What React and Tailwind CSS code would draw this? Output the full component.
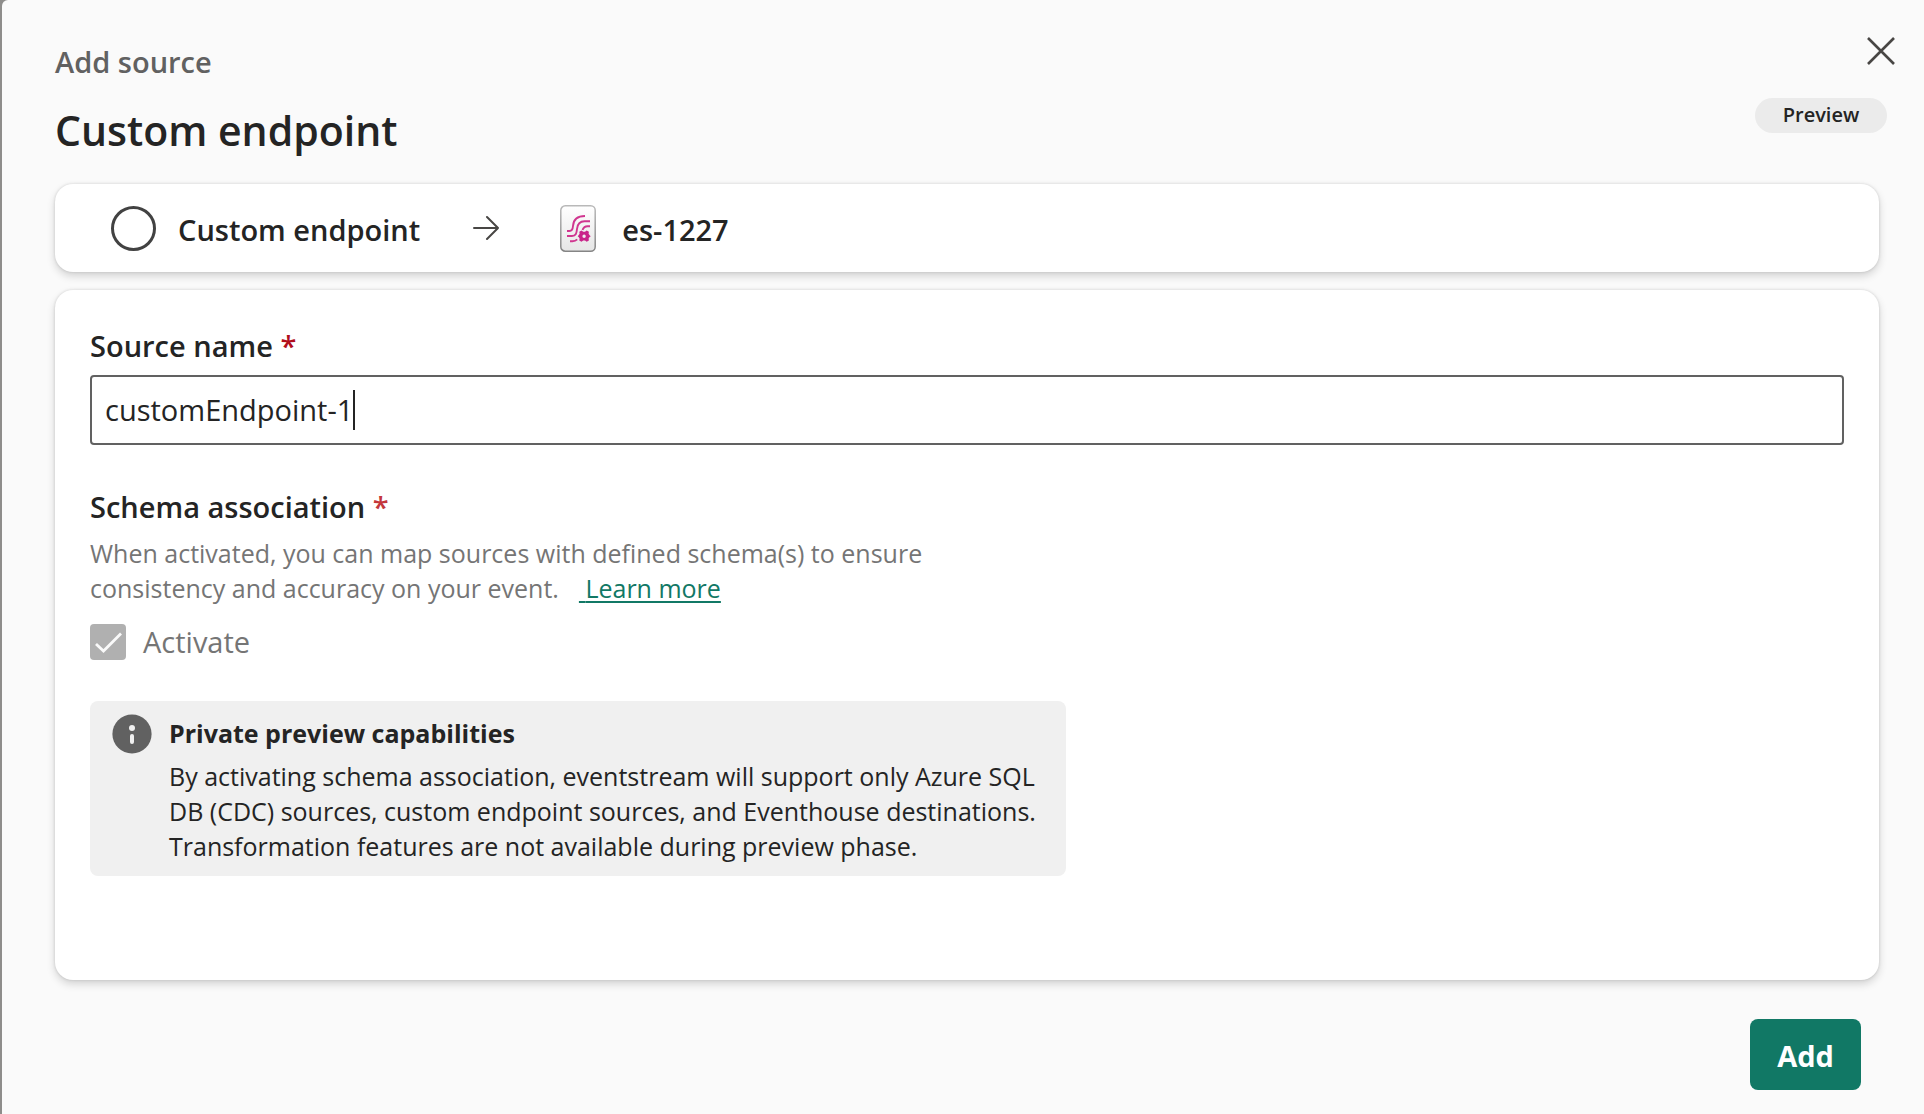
function StreamIcon() {
  return (
    <svg viewBox="0 0 36 47" className="h-[47px] w-9 shrink-0" fill="none" aria-hidden="true">
      <defs>
        <linearGradient id="tile" x1="0" y1="0" x2="0" y2="1">
          <stop offset="0" stopColor="#ffffff" />
          <stop offset="1" stopColor="#e6e6e6" />
        </linearGradient>
        <linearGradient id="rim" x1="0" y1="0" x2="0" y2="1">
          <stop offset="0" stopColor="#b9b9b9" />
          <stop offset="1" stopColor="#858585" />
        </linearGradient>
      </defs>
      <rect x="0.8" y="0.8" width="34.4" height="45.4" rx="4.5" fill="url(#tile)" stroke="url(#rim)" strokeWidth="1.5" />
      <g stroke="#d0368f" strokeWidth="1.9">
        <path d="M7 26h2.5c3 0 3.300-2 3.500-5 .4-6 4.500-10 12-10" />
        <path d="M7 31h5c4 0 4.600-3 5-7 .5-5 3-7.700 7.500-7.700H30" />
        <path d="M10 36.200h2.500c2 0 3.500-.6 4.700-1.800" />
        <path d="M22.500 25c1-2.500 2.500-3.700 5-3.700H30" />
      </g>
      <path
        fillRule="evenodd"
        fill="#c9258a"
        d="M21.500 25.600l1.700 1.200h1.800l1.700-1.200 2.200 1.200-.3 2 1 1.500 1.200.9-1.200.9-1 1.500.3 2-2.200 1.200-1.700-1.200h-1.800l-1.700 1.200-2.200-1.200.3-2-1-1.500-.9-.9.900-.9 1-1.500-.3-2zM24.100 29.500a1.700 1.700 0 100 3.400 1.700 1.700 0 000-3.400z"
      />
    </svg>
  );
}

function ArrowIcon() {
  return (
    <svg viewBox="0 0 26 26" className="size-[26px] shrink-0" fill="none" stroke="#484644" strokeWidth="2" strokeLinecap="round" strokeLinejoin="round" aria-hidden="true">
      <path d="M1 13h24M14 2l11 11-11 11" />
    </svg>
  );
}

function CloseIcon() {
  return (
    <svg viewBox="0 0 28 28" className="size-7" fill="none" stroke="#484644" strokeWidth="2.600" aria-hidden="true">
      <path d="M1 1l26 26M27 1L1 27" />
    </svg>
  );
}

function InfoIcon() {
  return (
    <svg viewBox="0 0 40 40" className="size-10 shrink-0" aria-hidden="true">
      <circle cx="20" cy="20" r="19.600" fill="#616161" />
      <circle cx="20" cy="14" r="3" fill="#f0f0f0" />
      <rect x="18" y="20" width="4" height="10" rx="2" fill="#f0f0f0" />
    </svg>
  );
}

const cardClass = "rounded-[18px] bg-white shadow-[0_4px_8px_rgba(0,0,0,0.16),0_0_3px_rgba(0,0,0,0.14)]";

export default function App() {
  return (
    <div className="min-h-screen bg-[#8e8d8b] pl-0.5 font-['Open_Sans','Noto_Sans',sans-serif] text-[#242424]">
      <main className="flex min-h-screen flex-col rounded-tl-md bg-[#fafafa] pr-[45px] pb-6 pl-[53px]">
        <header className="mb-[25px] flex items-start justify-between pt-[37px]">
          <div>
            <p className="text-[29px] leading-[50px] font-semibold text-[#616161]">Add source</p>
            <h1 className="mt-[14px] text-[41px] leading-[58px] font-semibold">Custom endpoint</h1>
          </div>
          <div className="-mr-2 flex flex-col items-end">
            <button type="button" aria-label="Close" className="-mr-2">
              <CloseIcon />
            </button>
            <span className="mt-[33px] flex h-[35px] w-[132px] items-center justify-center rounded-full bg-[#ebebeb] pb-0.5 text-[20px] font-semibold">
              Preview
            </span>
          </div>
        </header>

        <section className={cardClass + " flex h-[88px] items-center pl-14"}>
          <span className="size-[45px] shrink-0 rounded-full border-[3px] border-[#424242]" />
          <span className="ml-[22px] pt-1 text-[29px] font-semibold">Custom endpoint</span>
          <span className="ml-[53px]">
            <ArrowIcon />
          </span>
          <span className="ml-[61px]">
            <StreamIcon />
          </span>
          <span className="ml-[26px] pt-1 text-[29px] font-semibold">es-1227</span>
        </section>

        <form className={cardClass + " mt-[18px] flex-1 px-[35px] pt-9"} onSubmit={(e) => e.preventDefault()}>
          <label htmlFor="source-name" className="block text-[29px] leading-10 font-semibold">
            Source name <span className="text-[#b10e1c]">*</span>
          </label>
          <div className="mt-[9px] flex h-[70px] items-center rounded-[4px] border-2 border-[#616161] bg-white pl-[13px]">
            <input id="source-name" type="text" defaultValue="customEndpoint-1" className="field-sizing-content bg-transparent text-[29px] caret-transparent outline-none" />
            <span className="h-10 w-0.5 bg-[#242424]" />
          </div>

          <h2 className="mt-[42px] text-[29px] leading-10 font-semibold">
            Schema association <span className="text-[#c4373c]">*</span>
          </h2>
          <p className="mt-[9px] max-w-[860px] text-[25px] leading-[35px] text-[#757575]">
            When activated, you can map sources with defined schema(s) to ensure
            <br />
            consistency and accuracy on your event.
            <a href="#learn-more" className="ml-5 text-[#117865] underline decoration-2 underline-offset-3">
              {"\u00a0"}Learn more
            </a>
          </p>
          <label className="mt-[18px] flex h-9 w-fit items-center gap-[17px] text-[29px] text-[#757575]">
            <span className="grid size-9 place-items-center">
              <input type="checkbox" defaultChecked disabled className="col-start-1 row-start-1 size-9 appearance-none rounded-[4px] bg-[#b0b0b0]" />
              <svg viewBox="0 0 36 36" className="col-start-1 row-start-1 size-9" fill="none" stroke="#fafafa" strokeWidth="2.800" aria-hidden="true">
                <path d="M6 20l7.500 7L31 9.500" />
              </svg>
            </span>
            Activate
          </label>

          <aside className="mt-[41px] flex w-[976px] max-w-full rounded-lg bg-[#f0f0f0] pt-[13px] pb-3 pl-[22px]">
            <InfoIcon />
            <div className="ml-[17px]">
              <h3 className="text-[25px] leading-[38px] font-bold">Private preview capabilities</h3>
              <p className="mt-[7px] text-[25px] leading-[35px]">
                By activating schema association, eventstream will support only Azure SQL
                <br />
                DB (CDC) sources, custom endpoint sources, and Eventhouse destinations.
                <br />
                Transformation features are not available during preview phase.
              </p>
            </div>
          </aside>
        </form>

        <footer className="mt-[39px] flex justify-end pr-[18px]">
          <button type="button" className="h-[71px] w-[111px] rounded-lg bg-[#117865] pt-0.5 text-[29px] font-bold text-white">
            Add
          </button>
        </footer>
      </main>
    </div>
  );
}
